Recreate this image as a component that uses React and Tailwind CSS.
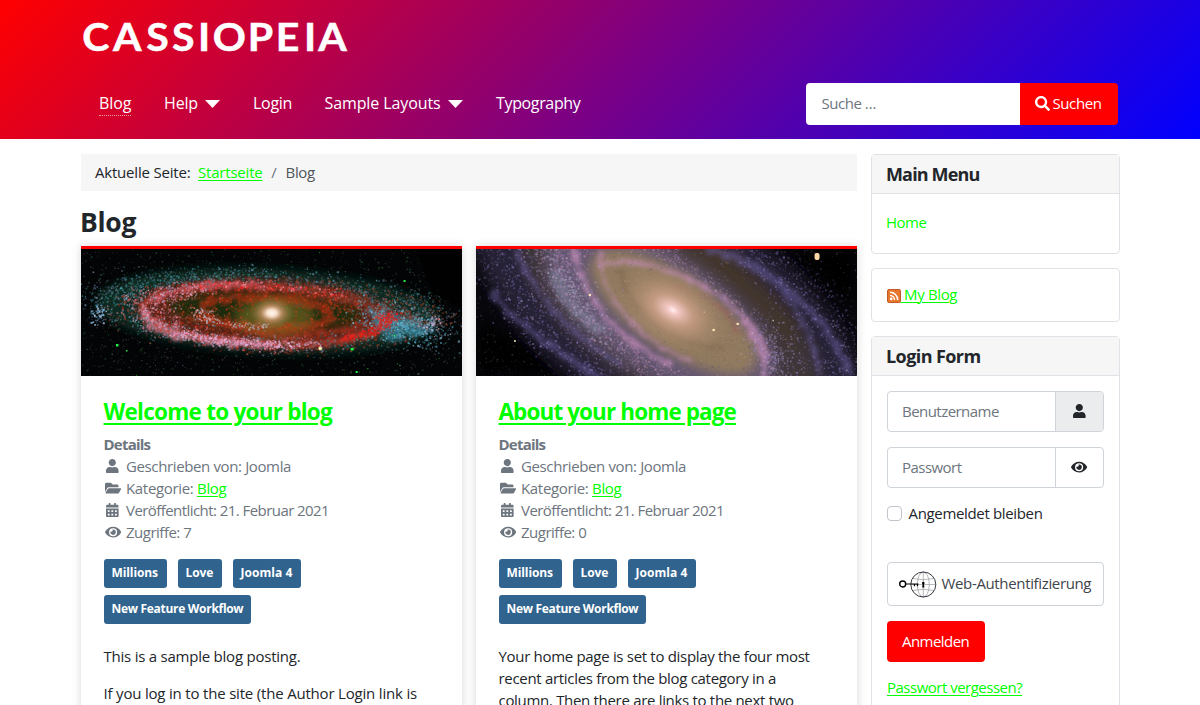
import React from "react";
import { FaUser, FaFolderOpen, FaCalendarAlt, FaEye, FaSearch } from "react-icons/fa";

// Deterministic random source so the star fields are stable between renders
function createRandom(seed) {
  let s = seed;
  return () => {
    s = (s * 1664525 + 1013904223) % 4294967296;
    return s / 4294967296;
  };
}

function ringStars(rand, { cx, cy, rx, ry, rot = 0, from = 0, to = 360, spread, n, colors, size = 1.4, alpha = 0.6 }) {
  const out = [];
  const r = (rot * Math.PI) / 180;
  for (let i = 0; i < n; i++) {
    const t = ((from + rand() * (to - from)) * Math.PI) / 180;
    const k = 1 + (rand() + rand() + rand() - 1.5) * spread;
    const x = Math.cos(t) * rx * k;
    const y = Math.sin(t) * ry * k + (rand() - 0.5) * 4;
    out.push([
      cx + x * Math.cos(r) - y * Math.sin(r),
      cy + x * Math.sin(r) + y * Math.cos(r),
      0.7 + rand() * size,
      colors[Math.floor(rand() * colors.length)],
      alpha * (0.35 + rand() * 0.65),
    ]);
  }
  return out;
}

function fieldStars(rand, n, colors, alpha = 0.6) {
  const out = [];
  for (let i = 0; i < n; i++) {
    out.push([rand() * 381, rand() * 127, 0.6 + rand() * 0.9, colors[Math.floor(rand() * colors.length)], alpha * rand()]);
  }
  return out;
}

function Stars({ items }) {
  return items.map(([x, y, s, c, o], i) => (
    <rect key={i} x={x.toFixed(1)} y={y.toFixed(1)} width={s.toFixed(1)} height={s.toFixed(1)} fill={c} opacity={o.toFixed(2)} />
  ));
}

const r1 = createRandom(7);
const andromeda = [
  ...fieldStars(r1, 2200, ["#3c6b3c", "#52525e", "#6b4a4a", "#2f6a4a", "#4b4b6a"], 0.7),
  ...fieldStars(r1, 70, ["#2bff3a", "#7dff7d"], 0.6),
  ...ringStars(r1, { cx: 187, cy: 60, rx: 163, ry: 34, rot: 3, spread: 0.3, n: 1400, colors: ["#2f7f86", "#3f96a3", "#5a6f8c", "#256048", "#7ba8c4"], alpha: 0.65 }),
  ...ringStars(r1, { cx: 187, cy: 58, rx: 150, ry: 33, rot: 2, from: 185, to: 275, spread: 0.22, n: 420, colors: ["#3f96a3", "#58b0c0", "#6a80a8", "#2f7f66"], alpha: 0.7 }),
  ...ringStars(r1, { cx: 187, cy: 64, rx: 160, ry: 31, rot: 3, from: 272, to: 365, spread: 0.24, n: 750, colors: ["#8a3a20", "#93452a", "#7a4a50", "#5b80a8"], alpha: 0.7 }),
  ...ringStars(r1, { cx: 180, cy: 66, rx: 122, ry: 29, rot: 3, spread: 0.34, n: 1500, colors: ["#e02818", "#b52e18", "#c45848", "#8f2b18"], alpha: 0.65 }),
  ...ringStars(r1, { cx: 182, cy: 66, rx: 119, ry: 29, rot: 3, from: 60, to: 240, spread: 0.26, n: 1200, colors: ["#f0a0c0", "#e8c0dc", "#d87890", "#c0b0e0", "#e05050"], alpha: 0.65 }),
  ...ringStars(r1, { cx: 182, cy: 66, rx: 119, ry: 29, rot: 3, from: 75, to: 135, spread: 0.14, n: 320, colors: ["#f4b8e0", "#e8c0f0", "#f090b8"], alpha: 0.75 }),
  ...ringStars(r1, { cx: 182, cy: 66, rx: 123, ry: 30, rot: 3, from: 235, to: 310, spread: 0.14, n: 260, colors: ["#ff4850", "#ff90a0", "#f02020"], alpha: 0.8 }),
  ...ringStars(r1, { cx: 185, cy: 64, rx: 70, ry: 16, rot: -4, spread: 0.5, n: 900, colors: ["#c02a14", "#a83a18", "#8a4a20", "#e04020"], alpha: 0.6 }),
  ...ringStars(r1, { cx: 185, cy: 64, rx: 66, ry: 13, rot: 0, from: 85, to: 200, spread: 0.18, n: 200, colors: ["#c8d8f0", "#f0c0d0", "#90b0d0", "#f07060"], alpha: 0.75 }),
  ...ringStars(r1, { cx: 320, cy: 75, rx: 28, ry: 10, rot: 15, spread: 1.3, n: 700, colors: ["#64b8d8", "#4a9ab8", "#88cce8", "#347888"], alpha: 0.75 }),
  ...ringStars(r1, { cx: 258, cy: 76, rx: 50, ry: 13, rot: -8, from: -25, to: 90, spread: 0.2, n: 330, colors: ["#ff1414", "#e83020", "#c82020"], alpha: 0.8 }),
  ...ringStars(r1, { cx: 17, cy: 63, rx: 4, ry: 7, spread: 1.2, n: 70, colors: ["#8fd0ff", "#c0d8ff", "#6098d0"], alpha: 0.8 }),
  ...ringStars(r1, { cx: 352, cy: 76, rx: 8, ry: 5, spread: 1.2, n: 70, colors: ["#c0b0e0", "#a0b0d0", "#f090a0"], alpha: 0.8 }),
];

const r2 = createRandom(23);
const violet = ["#7c6cb4", "#8f80c4", "#5c528c", "#a690c0", "#6a5f9c"];
const pink = ["#c890bc", "#dca8cc", "#b07cae", "#9a7ab0", "#8878a8"];
const spiral = [
  ...fieldStars(r2, 1900, ["#6a5f78", "#4a4468", "#7a6a60", "#5a5a6c"], 0.5),
  ...fieldStars(r2, 50, ["#b0a0ff", "#ffffff", "#8f80f0"], 0.8),
  ...ringStars(r2, { cx: 188, cy: 64, rx: 134, ry: 57, rot: 34, from: 60, to: 262, spread: 0.28, n: 2000, colors: pink, alpha: 0.4 }),
  ...ringStars(r2, { cx: 190, cy: 64, rx: 118, ry: 51, rot: 34, spread: 0.16, n: 1200, colors: pink, alpha: 0.45 }),
  ...ringStars(r2, { cx: 192, cy: 68, rx: 196, ry: 90, rot: 33, from: 70, to: 235, spread: 0.24, n: 1700, colors: violet, alpha: 0.55 }),
  ...ringStars(r2, { cx: 208, cy: 64, rx: 200, ry: 93, rot: 33, from: 255, to: 385, spread: 0.28, n: 1500, colors: violet, alpha: 0.5 }),
  ...ringStars(r2, { cx: 98, cy: 42, rx: 42, ry: 12, rot: 55, spread: 1.3, n: 650, colors: ["#a8b0c8", "#9098b8", "#c0c0d8", "#8078a0"], alpha: 0.45 }),
  ...ringStars(r2, { cx: 300, cy: 108, rx: 26, ry: 14, rot: 60, spread: 1.3, n: 420, colors: ["#a8a0d0", "#8878c0", "#c0a8d8"], alpha: 0.5 }),
  ...ringStars(r2, { cx: 197, cy: 62, rx: 80, ry: 35, rot: 32, spread: 0.8, n: 900, colors: ["#a88a6c", "#c09a80", "#8a765a", "#7c684c"], alpha: 0.3 }),
];

function AndromedaPicture() {
  return (
    <svg viewBox="0 0 381 127" preserveAspectRatio="none" className="block h-[127px] w-full bg-[#030405]">
      <defs>
        <filter id="a-soft" x="-50%" y="-50%" width="200%" height="200%"><feGaussianBlur stdDeviation="5" /></filter>
        <filter id="a-thin" x="-20%" y="-50%" width="140%" height="200%">
          <feTurbulence type="fractalNoise" baseFrequency=".12" numOctaves="4" seed="4" result="n" />
          <feDisplacementMap in="SourceGraphic" in2="n" scale="14" xChannelSelector="R" yChannelSelector="G" />
          <feGaussianBlur stdDeviation="1.4" />
        </filter>
        <radialGradient id="a-core">
          <stop offset="0" stopColor="#fff8f0" /><stop offset=".2" stopColor="#f8e0cc" />
          <stop offset=".45" stopColor="#d09870" stopOpacity=".7" /><stop offset="1" stopColor="#7a7030" stopOpacity="0" />
        </radialGradient>
      </defs>
      <g filter="url(#a-soft)" transform="rotate(3 187 63)">
        <ellipse cx="187" cy="62" rx="172" ry="42" fill="#0e2a20" />
        <ellipse cx="185" cy="64" rx="124" ry="31" fill="#5a2412" />
        <ellipse cx="184" cy="62" rx="98" ry="19" fill="#1a2a10" />
      </g>
      <g filter="url(#a-thin)" fill="none" transform="rotate(3 187 63)">
        <ellipse cx="182" cy="66" rx="120" ry="29" stroke="#a8382a" strokeWidth="8" opacity=".8" />
        <path d="M62 66 C65 92 120 97 185 96" stroke="#c88098" strokeWidth="7" opacity=".75" />
        <path d="M70 58 C90 42 130 36 180 37" stroke="#c86070" strokeWidth="5" opacity=".7" />
        <path d="M225 42 Q290 44 345 70" stroke="#6a2c18" strokeWidth="10" opacity=".7" />
        <ellipse cx="186" cy="64" rx="66" ry="15" stroke="#982c14" strokeWidth="8" opacity=".8" />
        <path d="M110 72 C130 82 160 78 180 84 S260 80 290 70" stroke="#a83018" strokeWidth="4" opacity=".8" />
        <path d="M288 55 L360 72 L305 86 Z" fill="#3888a0" opacity=".7" />
      </g>
      <ellipse cx="194" cy="68" rx="40" ry="19" fill="#8c7828" opacity=".5" filter="url(#a-soft)" />
      <Stars items={andromeda} />
      <ellipse cx="191" cy="64" rx="24" ry="17" fill="url(#a-core)" />
      <path d="M335 0 H381 V58 L372 56 L351 42 Z" fill="#010101" opacity=".9" />
      <g fill="#20f040">
        <rect x="35" y="95" width="2.5" height="2.5" /><rect x="270" y="99" width="3" height="2.5" />
        <rect x="323" y="31" width="2" height="2" /><rect x="313" y="86" width="1.5" height="1.5" />
        <rect x="275" y="122" width="2" height="2" /><rect x="45" y="101" width="1.5" height="1.5" />
      </g>
      <circle cx="239.500" cy="99.500" r="1.800" fill="#f4e8a0" />
    </svg>
  );
}

function SpiralPicture() {
  return (
    <svg viewBox="0 0 381 127" preserveAspectRatio="none" className="block h-[127px] w-full bg-[#08070c]">
      <defs>
        <filter id="s-soft" x="-50%" y="-50%" width="200%" height="200%"><feGaussianBlur stdDeviation="8" /></filter>
        <filter id="s-mid" x="-50%" y="-50%" width="200%" height="200%"><feGaussianBlur stdDeviation="6" /></filter>
        <filter id="s-thin" x="-30%" y="-30%" width="160%" height="160%">
          <feTurbulence type="fractalNoise" baseFrequency=".11" numOctaves="4" seed="9" result="n" />
          <feDisplacementMap in="SourceGraphic" in2="n" scale="10" xChannelSelector="R" yChannelSelector="G" />
          <feGaussianBlur stdDeviation="2.2" />
        </filter>
        <radialGradient id="s-core">
          <stop offset="0" stopColor="#fff0f0" /><stop offset=".1" stopColor="#f4c8c4" />
          <stop offset=".35" stopColor="#cca088" stopOpacity=".85" /><stop offset="1" stopColor="#a08464" stopOpacity="0" />
        </radialGradient>
      </defs>
      <g filter="url(#s-soft)">
        <ellipse cx="192" cy="62" rx="222" ry="108" transform="rotate(33 192 62)" fill="#262134" />
        <ellipse cx="195" cy="62" rx="172" ry="80" transform="rotate(34 195 62)" fill="#3e3638" />
        <ellipse cx="184" cy="64" rx="132" ry="58" transform="rotate(34 184 64)" fill="#645670" />
        <path d="M175 -8 L250 0 L320 70 L320 105 L285 62 L240 28Z" fill="#43352a" />
        <path d="M0 66 L55 100 L90 127 H0Z" fill="#040306" />
        <path d="M310 0 H381 V62Z" fill="#040306" />
      </g>
      <ellipse cx="198" cy="63" rx="98" ry="38" transform="rotate(34 198 63)" fill="#917a5e" filter="url(#s-mid)" />
      <g filter="url(#s-thin)" fill="none">
        <g stroke="#c48cba" opacity=".75">
          <path d="M98 0 C108 50 140 90 195 116" strokeWidth="5" />
          <path d="M125 0 C122 45 160 88 215 112" strokeWidth="3" />
          <path d="M122 14 C165 6 228 30 262 62 S292 110 288 130" strokeWidth="4" />
          <path d="M262 62 S292 100 289 130" strokeWidth="5" />
        </g>
        <g stroke="#6c60a4" opacity=".5">
          <path d="M15 40 C40 80 90 105 125 130" strokeWidth="7" />
          <path d="M40 0 C60 50 100 90 150 120" strokeWidth="5" />
          <path d="M230 0 C290 15 350 60 375 125" strokeWidth="8" />
          <path d="M270 10 C310 30 335 80 345 125" strokeWidth="4" />
        </g>
        <path d="M78 20 Q85 60 128 82" stroke="#8c94b0" strokeWidth="12" opacity=".45" />
        <path d="M195 38 C235 45 258 65 262 85" stroke="#a05058" strokeWidth="2" opacity=".6" />
        <path d="M145 20 C150 60 190 95 250 100" stroke="#7c664c" strokeWidth="5" opacity=".6" />
      </g>
      <Stars items={spiral} />
      <ellipse cx="197" cy="61" rx="62" ry="38" transform="rotate(30 197 61)" fill="url(#s-core)" />
      <rect x="339" y="4" width="5" height="7" rx="2" fill="#ffd8a8" />
      <g fill="#ffe4b8"><circle cx="238" cy="81" r="1.300" /><circle cx="262" cy="75" r="1.300" /><circle cx="114" cy="46" r="1.300" /><circle cx="39" cy="92" r="1" /></g>
    </svg>
  );
}

function NavLink({ children, className, caret, active }) {
  return (
    <a href="#" className={"flex items-center leading-[23px] " + className}>
      <span className={active ? "border-b border-dotted border-white/60" : "border-b border-transparent"}>{children}</span>
      {caret && (
        <svg viewBox="0 0 15 8" className="ml-[7px] h-[8px] w-[15px] fill-white"><path d="M0 0H15L7.500 8Z" /></svg>
      )}
    </a>
  );
}

function InfoRow({ icon: Icon, iconClass, children }) {
  return (
    <div className="flex h-[22px] items-center">
      <span className="mr-[4px] flex w-[18.500px] justify-center"><Icon preserveAspectRatio="none" className={iconClass} /></span>
      {children}
    </div>
  );
}

const link = "text-[#00ff00] underline decoration-1 underline-offset-2";

function Tag({ children, className }) {
  return (
    <span className={"flex h-[28.500px] items-center rounded-[3px] bg-[#30638d] pl-2 text-[12px] font-bold text-white " + className}>{children}</span>
  );
}

function Post({ picture, title, titleClass, hits, children }) {
  return (
    <article className="w-[380.500px] shrink-0 border-t-[3px] border-[#ff0000] bg-white shadow-[0_0_9px_rgba(0,0,0,0.16)]">
      {picture}
      <div className="px-[22.500px] pt-[21px]">
        <h2 className={"text-[22.500px] leading-[30px] font-bold " + titleClass}>
          <a href="#" className="text-[#00ff00] underline decoration-2 underline-offset-[3px]">{title}</a>
        </h2>
        <div className="mt-[6px] text-[#6d757e]">
          <div className="h-[22px] leading-[22px] font-bold tracking-[-0.780px]">Details</div>
          <InfoRow icon={FaUser} iconClass="h-[14.400px] w-[12.600px]"><span className="tracking-[-0.370px]">Geschrieben von: Joomla</span></InfoRow>
          <InfoRow icon={FaFolderOpen} iconClass="h-[14.400px] w-[16.200px]"><span className="tracking-[-0.330px]">Kategorie:&nbsp;<a href="#" className={link + " tracking-[-0.320px]"}>Blog</a></span></InfoRow>
          <InfoRow icon={FaCalendarAlt} iconClass="h-[14.400px] w-[12.600px]"><span className="tracking-[-0.560px]">Veröffentlicht: 21. Februar 2021</span></InfoRow>
          <InfoRow icon={FaEye} iconClass="h-[14.400px] w-[16.200px]"><span className="tracking-[-0.500px]">Zugriffe: {hits}</span></InfoRow>
        </div>
        <div className="mt-[16px] flex flex-wrap gap-x-[11px] gap-y-[7.500px]">
          <Tag className="w-[63px] tracking-[-0.100px]">Millions</Tag>
          <Tag className="w-[44px] tracking-[-0.100px]">Love</Tag>
          <Tag className="w-[68px] tracking-[0.050px]">Joomla 4</Tag>
          <Tag className="w-[147.500px] tracking-[-0.300px]">New Feature Workflow</Tag>
        </div>
        <div className="mt-[21.500px] whitespace-nowrap text-[#22262a]">{children}</div>
      </div>
    </article>
  );
}

function Card({ title, titleClass, className, children }) {
  return (
    <section className={"rounded-[4px] border border-[#dfe3e7] bg-white " + className}>
      {title && (
        <h3 className={"h-[39px] border-b border-[#dfe3e7] bg-[#f6f6f6] pl-[14px] text-[18px] leading-[38px] font-bold " + titleClass}>{title}</h3>
      )}
      {children}
    </section>
  );
}

function RssIcon() {
  return (
    <svg viewBox="0 0 14 14" className="h-[14px] w-[14px]">
      <rect x=".5" y=".5" width="13" height="13" rx="1.500" fill="#e8772e" stroke="#c45a2c" />
      <g fill="none" stroke="#fff" strokeWidth="1.500"><path d="M3 6.500A4.500 4.500 0 0 1 7.500 11M3 3.300A7.700 7.700 0 0 1 10.700 11" /></g>
      <circle cx="4.200" cy="9.900" r="1.300" fill="#fff" />
    </svg>
  );
}

function WebAuthIcon() {
  return (
    <svg viewBox="0 0 38 27" className="h-[27px] w-[38px]" fill="none">
      <g stroke="#888b8f" strokeWidth=".6">
        <ellipse cx="24.300" cy="13.500" rx="6" ry="12.500" />
        <path d="M24.300 1V26M11.800 13.500H36.800M13.500 7.500Q24.300 10 35 7.500M13.500 19.500Q24.300 17 35 19.500" />
      </g>
      <circle cx="24.300" cy="13.500" r="12.500" stroke="#20232b" strokeWidth=".9" />
      <circle cx="3.700" cy="13" r="3" stroke="#000" strokeWidth="1.400" />
      <path d="M7 13H19.500M15.500 13V15.200M18.500 13V15.200" stroke="#000" strokeWidth="1.200" />
      <path d="M24.300 10.800a1.300 1.300 0 0 1 .7 2.400l.4 3.300h-2.200l.4-3.300a1.300 1.300 0 0 1 .7-2.400Z" fill="#000" />
    </svg>
  );
}

export default function App() {
  return (
    <div className="h-[705px] overflow-hidden bg-white font-['Open_Sans',sans-serif] text-[15px] leading-[22px] text-[#22262a]">
      <header className="flex h-[139px] flex-col bg-[linear-gradient(135deg,#ff0000_0%,#0000ff_100%)] pr-[82px] pl-[81px]">
        <svg viewBox="0 0 270 45" className="mt-[14px] h-[45px] w-[270px]" role="img">
          <text transform="scale(1.08 1)" x="1.100 29.600 60.500 84.300 108.400 122 154.500 180.300 206.500 219.800" y="36.500" fill="#fff" className="font-['Lato',sans-serif] text-[38px] font-bold" stroke="#fff" strokeWidth=".5">CASSIOPEIA</text>
        </svg>
        <div className="mt-[24px] flex items-center justify-between">
          <nav className="flex pl-[18px] text-[16px] text-white">
            <NavLink active className="w-[65px] tracking-[-0.100px]">Blog</NavLink>
            <NavLink caret className="w-[89px] tracking-[-0.150px]">Help</NavLink>
            <NavLink className="w-[71.500px] tracking-[-0.300px]">Login</NavLink>
            <NavLink caret className="w-[171.500px] tracking-[-0.100px]">Sample Layouts</NavLink>
            <NavLink className="tracking-[-0.350px]">Typography</NavLink>
          </nav>
          <form className="flex h-[41.500px]">
            <div className="flex w-[214px] items-center rounded-l-[4px] bg-white pb-[1px] pl-[15.500px] tracking-[-0.470px] text-[#6d757e]">Suche …</div>
            <button type="button" className="flex w-[98px] items-center rounded-r-[4px] bg-[#ff0000] pb-[1px] pl-[15px] tracking-[-0.400px] text-white">
              <FaSearch className="mt-[1px] mr-[2.500px] h-[15px] w-[15px]" />Suchen
            </button>
          </form>
        </div>
      </header>

      <div className="flex gap-[14px] pt-[15px] pl-[81px]">
        <main className="w-[776px] shrink-0">
          <div className="flex h-[37px] items-center bg-[#f6f6f6] pb-[2px] pl-[14px]">
            <span className="w-[103px] tracking-[-0.200px]">Aktuelle Seite:</span>
            <a href="#" className={link + " tracking-[-0.200px]"}>Startseite</a>
            <span className="w-[23px] text-center text-[#6d757e]">/</span>
            <span className="tracking-[-0.320px] text-[#50565d]">Blog</span>
          </div>
          <h1 className="mt-[13px] -ml-[1px] h-[42px] text-[26.500px] leading-[36px] font-bold tracking-[-0.300px]">Blog</h1>
          <div className="flex h-[500px] gap-[14.500px]">
            <Post picture={<AndromedaPicture />} title="Welcome to your blog" titleClass="tracking-[-0.750px]" hits="7">
              <p className="tracking-[-0.230px]">This is a sample blog posting.</p>
              <p className="mt-[14.500px] tracking-[-0.190px]">If you log in to the site (the Author Login link is</p>
            </Post>
            <Post picture={<SpiralPicture />} title="About your home page" titleClass="tracking-[-0.900px]" hits="0">
              <p className="tracking-[-0.310px]">Your home page is set to display the four most<br />recent articles from the blog category in a<br />column. Then there are links to the next two</p>
            </Post>
          </div>
        </main>

        <aside className="flex w-[249px] shrink-0 flex-col gap-[14.500px]">
          <Card title="Main Menu" titleClass="tracking-[-0.850px]" className="h-[99.500px]">
            <a href="#" className="mt-[17px] ml-[14px] block tracking-[-0.500px] text-[#00ff00]">Home</a>
          </Card>
          <Card className="flex h-[54px] items-center pl-[14.500px]">
            <span className="mt-[2px]"><RssIcon /></span>
            <a href="#" className={link + " mb-[3px] whitespace-pre tracking-[-0.350px]"}> My Blog</a>
          </Card>
          <Card title="Login Form" titleClass="tracking-[-0.580px]" className="-mt-[1px] h-[500px]">
            <div className="flex flex-col px-[15px] pt-[15px]">
              <div className="flex h-[41.500px] overflow-hidden rounded-[4px] border border-[#ced4da] tracking-[-0.540px] text-[#6d757e]">
                <span className="flex w-[168px] items-center border-r border-[#ced4da] pb-[1px] pl-[14px]">Benutzername</span>
                <span className="flex grow items-center justify-center bg-[#eaecee]"><FaUser preserveAspectRatio="none" className="h-[14.400px] w-[12.600px] text-[#22262a]" /></span>
              </div>
              <div className="mt-[14.500px] flex h-[41.500px] overflow-hidden rounded-[4px] border border-[#ced4da] tracking-[-0.540px] text-[#6d757e]">
                <span className="flex w-[168px] items-center border-r border-[#ced4da] pb-[1px] pl-[14px]">Passwort</span>
                <span className="flex grow items-center justify-center"><FaEye preserveAspectRatio="none" className="h-[14.400px] w-[16.200px] text-[#22262a]" /></span>
              </div>
              <label className="mt-[14px] flex items-center">
                <span className="mt-[1px] mr-[6.500px] h-[15px] w-[15px] rounded-[4px] border border-[#bfc4ca]" />
                <span className="tracking-[-0.340px]">Angemeldet bleiben</span>
              </label>
              <button type="button" className="mt-[38px] flex h-[44px] items-center rounded-[4px] border border-[#ced4da] pl-[11px] tracking-[-0.350px] text-[#40454b]">
                <span className="mt-[1px] mr-[4.500px]"><WebAuthIcon /></span><span className="mb-[2px]">Web-Authentifizierung</span>
              </button>
              <button type="button" className="mt-[15px] flex h-[41px] w-[98px] items-center rounded-[4px] bg-[#ff0000] pb-[1px] pl-[15px] tracking-[-0.540px] text-white">Anmelden</button>
              <a href="#" className={link + " mt-[14px] tracking-[-0.500px]"}>Passwort vergessen?</a>
            </div>
          </Card>
        </aside>
      </div>
    </div>
  );
}
